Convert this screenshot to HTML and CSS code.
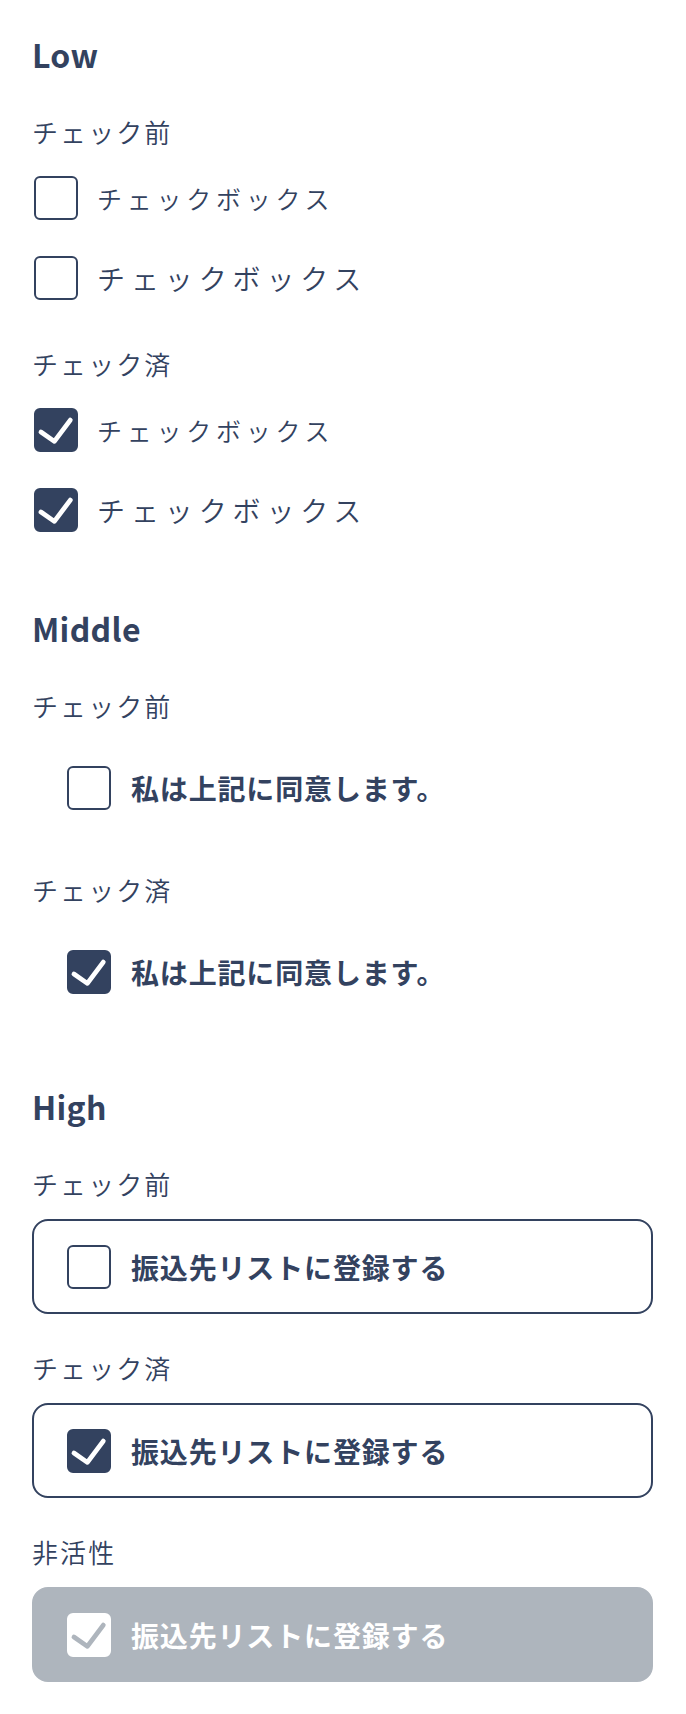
FILE: index.html
```html
<!DOCTYPE html>
<html lang="ja">
<head>
<meta charset="utf-8">
<title>Checkbox</title>
<link rel="stylesheet" href="styles.css">
</head>
<body>
<main class="page">
  <section class="level level-low">
    <h2 class="level-title">Low</h2>
    <div class="group">
      <p class="state-label">チェック前</p>
      <ul class="low-list">
        <li class="low-item size-s"><span class="box"></span><span class="low-text">チェックボックス</span></li>
        <li class="low-item size-m"><span class="box"></span><span class="low-text">チェックボックス</span></li>
      </ul>
    </div>
    <div class="group">
      <p class="state-label">チェック済</p>
      <ul class="low-list">
        <li class="low-item size-s"><span class="box is-checked"><svg class="check" viewBox="0 0 24 24"><path d="M3.8 13.1 L11.1 18.2 L19.8 6.6"/></svg></span><span class="low-text">チェックボックス</span></li>
        <li class="low-item size-m"><span class="box is-checked"><svg class="check" viewBox="0 0 24 24"><path d="M3.8 13.1 L11.1 18.2 L19.8 6.6"/></svg></span><span class="low-text">チェックボックス</span></li>
      </ul>
    </div>
  </section>

  <section class="level level-middle">
    <h2 class="level-title">Middle</h2>
    <div class="group">
      <p class="state-label">チェック前</p>
      <div class="mid-item"><span class="box"></span><span class="strong-text">私は上記に同意します。</span></div>
    </div>
    <div class="group">
      <p class="state-label">チェック済</p>
      <div class="mid-item"><span class="box is-checked"><svg class="check" viewBox="0 0 24 24"><path d="M3.8 13.1 L11.1 18.2 L19.8 6.6"/></svg></span><span class="strong-text">私は上記に同意します。</span></div>
    </div>
  </section>

  <section class="level level-high">
    <h2 class="level-title">High</h2>
    <div class="group-high">
      <p class="state-label">チェック前</p>
      <div class="card"><span class="box"></span><span class="strong-text">振込先リストに登録する</span></div>
    </div>
    <div class="group-high">
      <p class="state-label">チェック済</p>
      <div class="card"><span class="box is-checked"><svg class="check" viewBox="0 0 24 24"><path d="M3.8 13.1 L11.1 18.2 L19.8 6.6"/></svg></span><span class="strong-text">振込先リストに登録する</span></div>
    </div>
    <div class="group-high">
      <p class="state-label">非活性</p>
      <div class="card is-disabled"><span class="box is-disabled-box"><svg class="check check-gray" viewBox="0 0 24 24"><path d="M3.8 13.1 L11.1 18.2 L19.8 6.6"/></svg></span><span class="strong-text">振込先リストに登録する</span></div>
    </div>
  </section>
</main>
</body>
</html>
```
FILE: styles.css
```css
* { box-sizing: border-box; }

html, body {
  margin: 0;
  padding: 0;
  background: #ffffff;
}

body {
  font-family: "Noto Sans CJK JP", "Noto Sans", sans-serif;
  color: #33425f;
}

.page {
  padding: 30px 33px 32px 32px;
}

.level + .level {
  margin-top: 72px;
}

.level-title {
  margin: 0;
  font-size: 32px;
  line-height: 48px;
  font-weight: 700;
  letter-spacing: 0.01em;
}

.state-label {
  margin: 34px 0 0;
  font-size: 26px;
  line-height: 40px;
  font-weight: 350;
  letter-spacing: 0.08em;
}

.group + .group .state-label {
  margin-top: 44px;
}

.low-list {
  list-style: none;
  margin: 24px 0 0;
  padding: 0 0 0 2px;
  display: flex;
  flex-direction: column;
  gap: 36px;
}

.low-item {
  display: flex;
  align-items: center;
  gap: 19px;
  height: 44px;
}

.low-text {
  font-weight: 350;
  white-space: nowrap;
}

.size-s .low-text { font-size: 25px; line-height: 44px; letter-spacing: 0.19em; }
.size-m .low-text { font-size: 28px; line-height: 44px; letter-spacing: 0.21em; }

.box {
  flex: none;
  width: 44px;
  height: 44px;
  border: 2px solid #33425f;
  border-radius: 6px;
  background: #ffffff;
  display: flex;
  align-items: center;
  justify-content: center;
}

.box.is-checked {
  background: #33425f;
}

.check {
  width: 44px;
  height: 44px;
  margin: -2px;
  fill: none;
  stroke: #ffffff;
  stroke-width: 2.6;
  stroke-linecap: round;
  stroke-linejoin: round;
}

.check-gray { stroke: #aeb5bd; }

.mid-item {
  margin-top: 24px;
  padding: 16px 0 16px 35px;
  display: flex;
  align-items: center;
  gap: 20px;
}

.strong-text {
  font-size: 28px;
  line-height: 44px;
  font-weight: 700;
  letter-spacing: 0.03em;
  white-space: nowrap;
}

.group-high .card {
  margin-top: 15px;
}

.card {
  height: 95px;
  border: 2px solid #33425f;
  border-radius: 16px;
  padding: 0 31px 0 33px;
  display: flex;
  align-items: center;
  gap: 20px;
  background: #ffffff;
}

.card.is-disabled {
  background: #aeb5bd;
  border-color: #aeb5bd;
  color: #ffffff;
}

.box.is-disabled-box {
  background: #ffffff;
  border-color: #ffffff;
}
```
